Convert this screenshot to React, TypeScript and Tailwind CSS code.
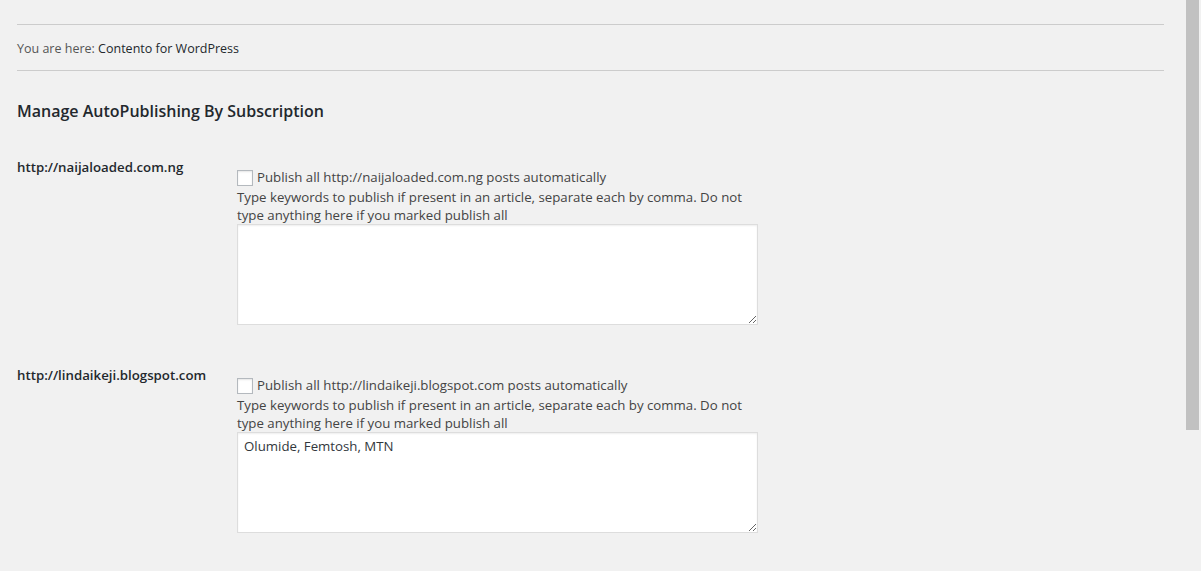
import React from "react";

const font = { fontFamily: '"Open Sans", "Noto Sans", sans-serif' };

function Row({ site, value, top }: { site: string; value: string; top: string }) {
  return (
    <div className={`flex ${top}`}>
      <div className="w-[220px] shrink-0 text-[13.25px] font-semibold text-[#23282d] leading-[18px] pt-[1px]">
        {site}
      </div>
      <div className="flex flex-col pt-[10px]">
        <label className="flex items-center gap-[4px] text-[13.25px] text-[#444] leading-[18px]">
          <span className="inline-block w-[16px] h-[16px] bg-white border border-[#b4b9be] shadow-[inset_0_1px_2px_rgba(0,0,0,0.1)] mt-[3px]" />
          <span>Publish all {site} posts automatically</span>
        </label>
        <p className="text-[13.25px] text-[#444] leading-[18px] w-[515px] mt-[2px]">
          Type keywords to publish if present in an article, separate each by comma. Do not type anything here if you marked publish all
        </p>
        <textarea
          defaultValue={value}
          className="w-[521px] h-[101px] bg-white border border-[#ddd] shadow-[inset_0_1px_2px_rgba(0,0,0,0.07)] px-[6px] py-[4px] text-[13.25px] text-[#32373c] leading-[18px] outline-none"
          style={font}
        />
      </div>
    </div>
  );
}

export default function App() {
  return (
    <div className="relative w-[1201px] h-[571px] bg-[#f1f1f1] overflow-hidden" style={font}>
      <div className="pl-[17px] pr-[37px]">
        <div className="h-[24px]" />
        <div className="border-t border-[#ccc]" />
        <div className="h-[45px] flex items-center pt-[4px] text-[12.5px] text-[#555]">
          <span>You are here:&nbsp;</span>
          <span className="text-[#23282d]">Contento for WordPress</span>
        </div>
        <div className="border-t border-[#ccc]" />
        <h2 className="mt-[28px] text-[16px] font-semibold text-[#23282d] leading-[24px]">
          Manage AutoPublishing By Subscription
        </h2>
        <Row site="http://naijaloaded.com.ng" value="" top="mt-[34px]" />
        <Row site="http://lindaikeji.blogspot.com" value="Olumide, Femtosh, MTN" top="mt-[40px]" />
      </div>
      <div className="absolute right-[2px] top-0 w-[13px] h-[430px] bg-[#c1c1c1]" />
    </div>
  );
}
